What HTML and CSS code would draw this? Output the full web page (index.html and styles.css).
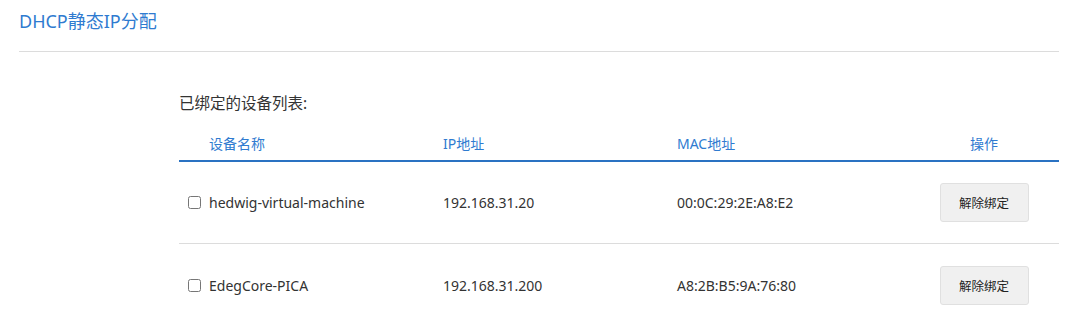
FILE: index.html
```html
<!DOCTYPE html>
<html>
<head>
<meta charset="utf-8">
<link rel="stylesheet" href="styles.css">
</head>
<body>
<div class="page">
  <h1 class="title">DHCP静态IP分配</h1>
  <div class="content">
    <div class="label">已绑定的设备列表:</div>
    <div class="table">
      <div class="row head">
        <div class="cell c1">设备名称</div>
        <div class="cell">IP地址</div>
        <div class="cell">MAC地址</div>
        <div class="cell c4">操作</div>
      </div>
      <div class="row">
        <div class="cell c1"><input type="checkbox" class="chk"><span>hedwig-virtual-machine</span></div>
        <div class="cell">192.168.31.20</div>
        <div class="cell">00:0C:29:2E:A8:E2</div>
        <div class="cell c4"><button class="btn">解除绑定</button></div>
      </div>
      <div class="row">
        <div class="cell c1"><input type="checkbox" class="chk"><span>EdegCore-PICA</span></div>
        <div class="cell">192.168.31.200</div>
        <div class="cell">A8:2B:B5:9A:76:80</div>
        <div class="cell c4"><button class="btn">解除绑定</button></div>
      </div>
    </div>
  </div>
</div>
</body>
</html>
```
FILE: styles.css
```css
* { box-sizing: border-box; }
body {
  margin: 0;
  font-family: "Noto Sans", "Noto Sans CJK SC", sans-serif;
  color: #333;
  background: #fff;
}
.page { padding: 0 9px 0 19px; }
.title {
  margin: 0;
  height: 52px;
  padding-top: 8px;
  font-size: 18px;
  font-weight: normal;
  line-height: 26px;
  color: #2f7bd0;
  border-bottom: 1px solid #dcdcdc;
}
.content { padding-left: 160px; padding-top: 39px; }
.label { font-size: 15.5px; line-height: 24px; color: #333; }
.table { margin-top: 13px; }
.row {
  display: grid;
  grid-template-columns: 264px 234px 232px 1fr;
  height: 82px;
  align-items: center;
  border-bottom: 1px solid #dcdcdc;
  font-size: 14px;
}
.row.head {
  height: 34px;
  border-bottom: 2px solid #2a72c2;
  color: #2f7bd0;
  font-size: 14px;
  padding-bottom: 2px;
}
.row:last-child { border-bottom: none; }
.row.head .c1 { padding-left: 30px; }
.cell { display: flex; align-items: center; }
.c1 { padding-left: 9px; }
.c4 { justify-content: center; }
.chk {
  margin: 0 8px 0 0;
  width: 13px;
  height: 13px;
}
.btn {
  width: 89px;
  height: 39px;
  background: #f0f0f0;
  border: 1px solid #e0e0e0;
  border-radius: 3px;
  font-family: "Noto Sans CJK SC", sans-serif;
  font-size: 12.5px;
  color: #222;
}
```
